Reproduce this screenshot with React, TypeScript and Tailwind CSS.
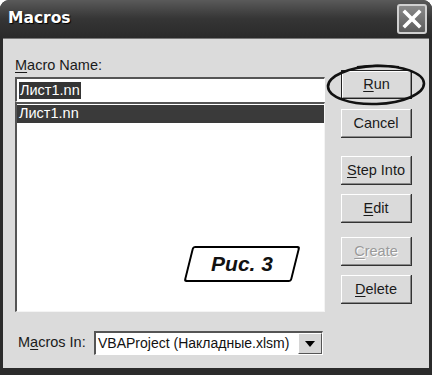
import type { ReactNode } from 'react';

const UI = "font-['Liberation_Sans','Arial',sans-serif]";

function U({ children }: { children: ReactNode }) {
    return <span className="underline underline-offset-2 decoration-1">{children}</span>;
}

interface BtnProps {
    children: ReactNode;
    className?: string;
    isDefault?: boolean;
    disabled?: boolean;
}

function Btn({ children, className = '', isDefault, disabled }: BtnProps) {
    return (
        <div
            className={`h-[29px] w-[71px] ${isDefault ? 'border border-[#222]' : 'border-r border-b border-[#333]'} ${className}`}
        >
            <div className="flex h-full w-full items-center justify-center border-t border-l border-white border-r border-b border-r-[#8a8a8a] border-b-[#8a8a8a] bg-[#dadada]">
                <span
                    className={`text-[14.5px] leading-none ${disabled ? 'text-[#9a9a9a] [text-shadow:1px_1px_0_#fff]' : 'text-[#1a1a1a]'}`}
                >
                    {children}
                </span>
            </div>
        </div>
    );
}

export default function App() {
    return (
        <div className={`h-[375px] w-[432px] bg-white ${UI}`}>
            <div className="flex h-full flex-col rounded-t-[9px] bg-[#2b2b2b]">
                {/* Title bar */}
                <div className="flex h-[38px] items-center justify-between rounded-t-[9px] bg-gradient-to-b from-[#5a5a5a] via-[#353535] to-[#2a2a2a] pl-[8px] pr-[5px]">
                    <span className="font-['DejaVu_Sans',sans-serif] text-[15.5px] font-bold text-white [text-shadow:1px_1px_1px_#000]">
                        Macros
                    </span>
                    <div className="flex h-[30px] w-[30px] items-center justify-center rounded-[3px] border-2 border-[#d0d0d0] bg-gradient-to-b from-[#8a8a8a] to-[#5c5c5c]">
                        <svg width="20" height="20" viewBox="0 0 20 20">
                            <path d="M3 3 L17 17 M17 3 L3 17" stroke="#fff" strokeWidth="3.6" strokeLinecap="square" />
                        </svg>
                    </div>
                </div>

                {/* Body */}
                <div className="relative mx-[3px] mb-[7px] flex flex-1 gap-[16px] border-t border-[#777] bg-[#dbdbdb] pl-[12px] pt-[17px]">
                    {/* Left column */}
                    <div className="flex w-[310px] flex-col">
                        <div className="h-[18px] text-[14.5px] leading-[18px] text-[#1a1a1a]">
                            <U>M</U>acro Name:
                        </div>
                        <div className="mt-[3px] flex h-[25px] items-center border-t-2 border-l-2 border-[#555] border-r border-b border-r-white border-b-white bg-white pl-[2px]">
                            <span className="bg-[#353535] px-[1px] text-[14.5px] leading-[17px] text-white">Лист1.nn</span>
                        </div>
                        <div className="relative h-[210px] border-t-2 border-l-2 border-[#555] border-r border-b border-r-[#f4f4f4] border-b-[#f4f4f4] bg-white">
                            <div className="mt-[1px] flex h-[18px] items-center bg-[#3a3a3a] pl-[2px] text-[14.5px] text-white">
                                Лист1.nn
                            </div>
                            {/* Figure label */}
                            <div className="absolute left-[171px] top-[142px] flex h-[36px] w-[108px] -skew-x-[14deg] items-center justify-center rounded-[3px] border-[2.5px] border-black bg-white">
                                <span className="skew-x-[14deg] font-['Liberation_Sans',sans-serif] text-[21px] font-bold italic text-[#111]">
                                    Рис. 3
                                </span>
                            </div>
                        </div>
                        <div className="mt-[19px] flex items-center">
                            <span className="w-[79px] pl-[3px] text-[14.5px] text-[#1a1a1a]">
                                M<U>a</U>cros In:
                            </span>
                            <div className="flex h-[24px] w-[229px] items-center border-t-2 border-l-2 border-[#555] border-r border-b border-r-white border-b-white bg-white">
                                <span className="flex-1 pl-[2px] text-[14px] text-[#111]">VBAProject (Накладные.xlsm)</span>
                                <div className="flex h-full w-[24px] items-center justify-center border-t border-l border-white border-r border-b border-r-[#555] border-b-[#555] bg-[#d6d6d6]">
                                    <svg width="10" height="6" viewBox="0 0 10 6">
                                        <path d="M0 0 H10 L5 6 Z" fill="#000" />
                                    </svg>
                                </div>
                            </div>
                        </div>
                    </div>

                    {/* Right column */}
                    <div className="flex flex-col">
                        <Btn isDefault className="mt-[14px]">
                            <U>R</U>un
                        </Btn>
                        <Btn className="mt-[10px]">Cancel</Btn>
                        <Btn className="mt-[18px]">
                            <U>S</U>tep Into
                        </Btn>
                        <Btn className="mt-[9px]">
                            <U>E</U>dit
                        </Btn>
                        <Btn disabled className="mt-[14px]">
                            <U>C</U>reate
                        </Btn>
                        <Btn className="mt-[9px]">
                            <U>D</U>elete
                        </Btn>
                    </div>

                    {/* Hand-drawn ellipse around Run */}
                    <svg className="pointer-events-none absolute left-[322px] top-[24px]" width="102" height="44" viewBox="0 0 102 44">
                        <ellipse cx="51" cy="22" rx="48" ry="19" fill="none" stroke="#111" strokeWidth="2.6" transform="rotate(-2 51 22)" />
                        <path d="M32 4 Q52 1 74 4" fill="none" stroke="#111" strokeWidth="2" />
                    </svg>
                </div>
            </div>
        </div>
    );
}
